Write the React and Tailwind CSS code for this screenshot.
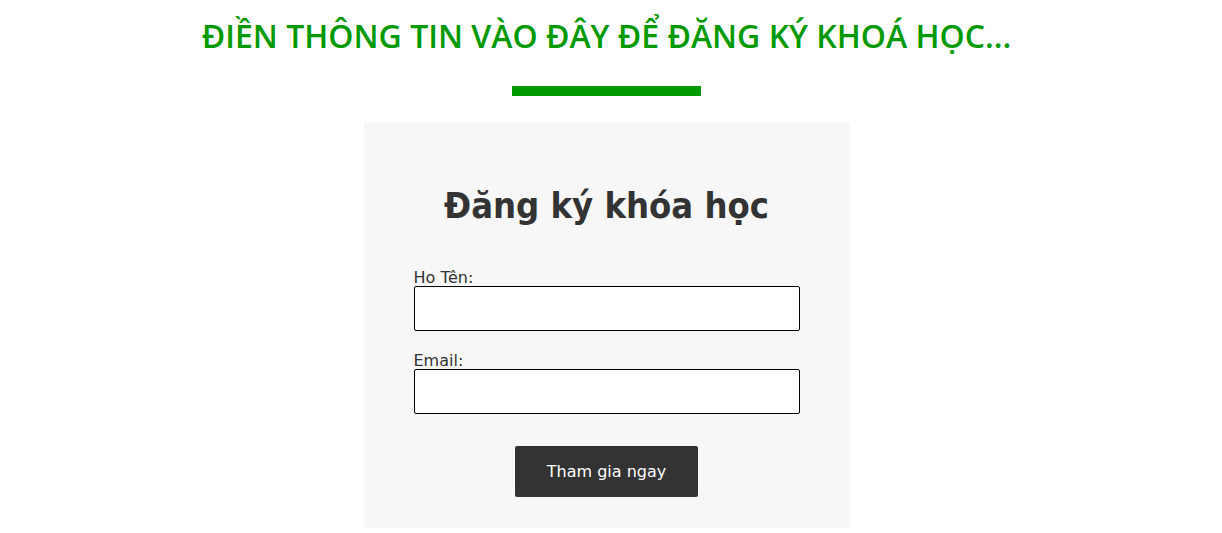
export default function App() {
  return (
    <div className="w-full bg-white flex flex-col items-center pr-[9px]" style={{ fontFamily: '"DejaVu Sans", Verdana, sans-serif' }}>
      <h2 className="mt-[14px] text-[32px] leading-[44px] font-semibold text-[#009900] tracking-normal" style={{ fontFamily: '"Open Sans", sans-serif' }}>
        ĐIỀN THÔNG TIN VÀO ĐÂY ĐỂ ĐĂNG KÝ KHOÁ HỌC...
      </h2>
      <div className="mt-[28px] w-[189px] h-[10px] bg-[#009900]" />
      <div className="mt-[26px] w-[486px] h-[406px] bg-[#f7f7f7] flex flex-col items-center">
        <h1 className="mt-[62px] text-[36px] leading-[44px] font-bold text-[#333333]" style={{ fontFamily: '"DejaVu Sans Condensed", "DejaVu Sans", sans-serif', fontStretch: 'condensed' }}>Đăng ký khóa học</h1>
        <form className="mt-[41px] w-[386px] flex flex-col">
          <label className="text-[16px] leading-[17px] text-[#333333]">Ho Tên:</label>
          <input type="text" className="h-[45px] w-full border border-black rounded-[2px] bg-white" />
          <label className="mt-[21px] text-[16px] leading-[17px] text-[#333333]">Email:</label>
          <input type="text" className="h-[45px] w-full border border-black rounded-[2px] bg-white" />
          <div className="mt-[32px] flex justify-center">
            <button type="button" className="w-[183px] h-[51px] bg-[#333333] text-white text-[16px] rounded-[2px]">Tham gia ngay</button>
          </div>
        </form>
      </div>
    </div>
  );
}
